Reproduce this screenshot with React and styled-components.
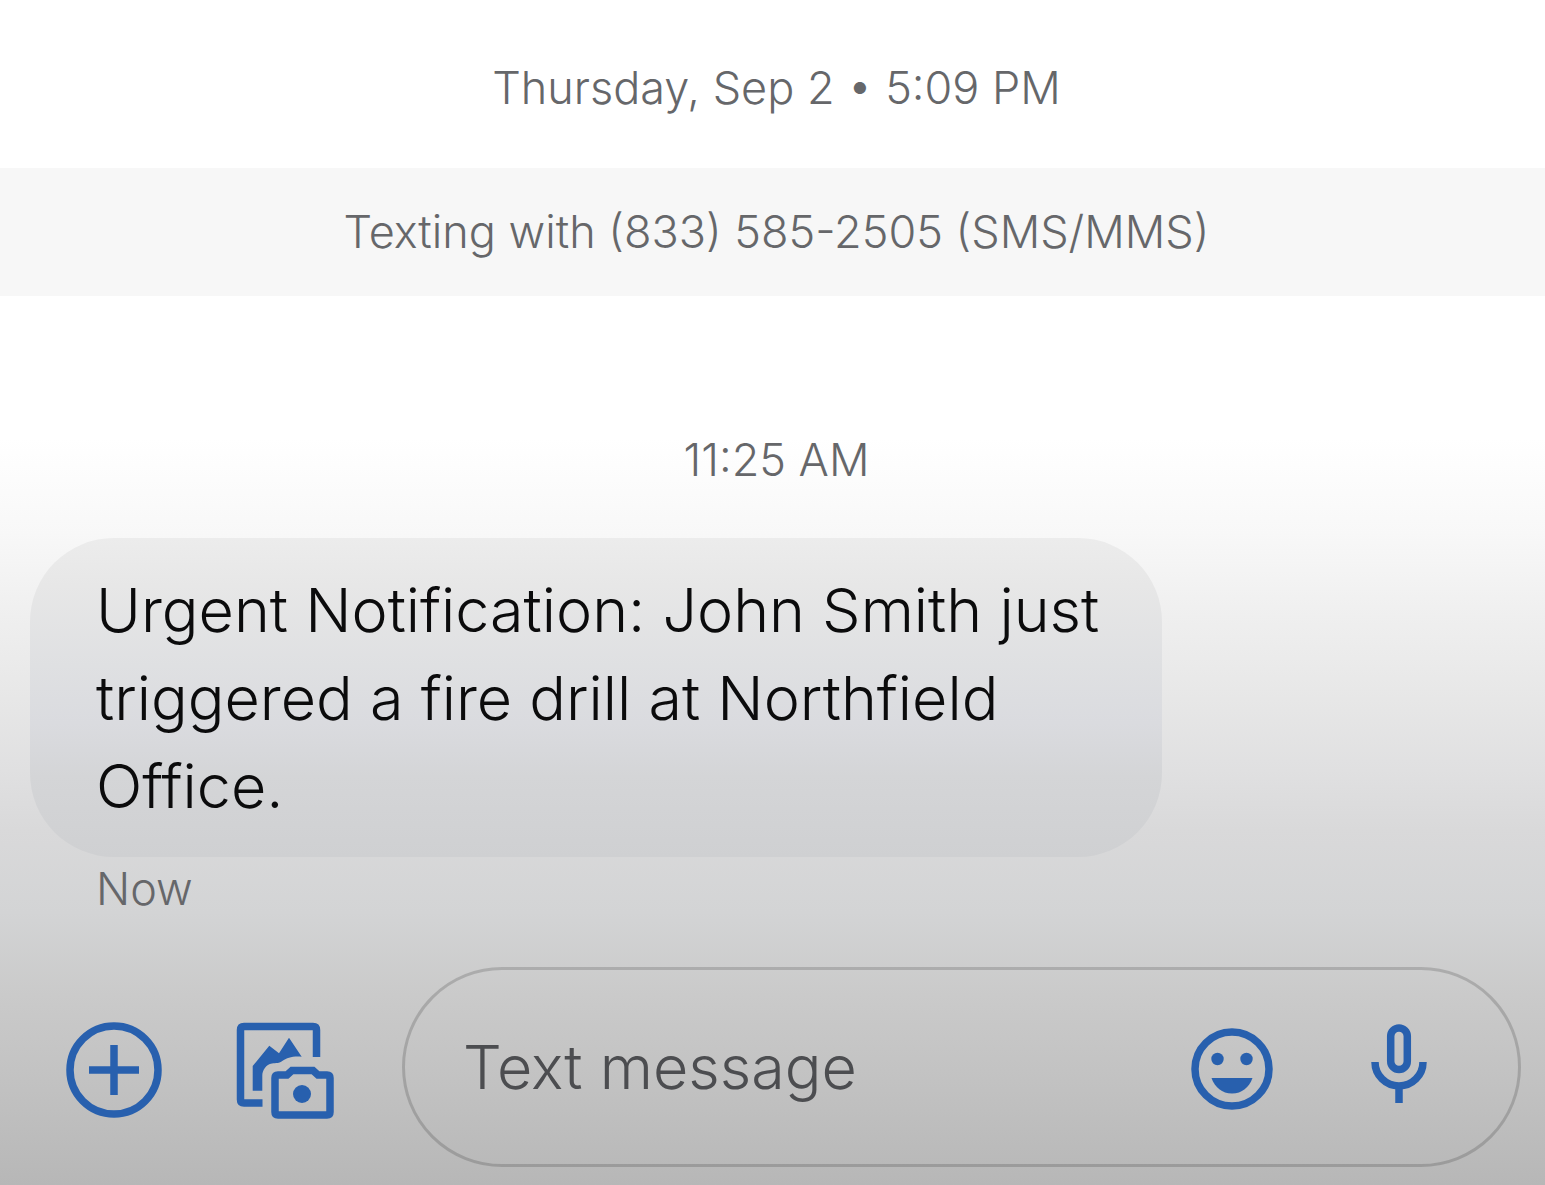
import React from 'react'
import styled, { createGlobalStyle } from 'styled-components'

const ink = '#0b0b0c'
const blue = '#2860ae'
const slate = '#66676a'

const GlobalStyle = createGlobalStyle`
  * {
    box-sizing: border-box;
  }

  body {
    margin: 0;
    font-family: Inter, 'Liberation Sans', sans-serif;
    font-weight: 300;
  }
`

const Screen = styled.main`
  display: flex;
  flex-direction: column;
  min-height: 100vh;
  background: linear-gradient(
    #ffffff 37%,
    #f8f8f8 45%,
    #efefef 52%,
    #e7e7e7 59%,
    #e0e0e1 65%,
    #d9d9da 70%,
    #d3d4d5 77%,
    #cacaca 84%,
    #c1c1c1 92%,
    #b7b7b7
  );
`

const Stamp = styled.div`
  padding: ${p => p.pad};
  font-size: 45px;
  line-height: 64px;
  text-align: center;
  color: ${slate};
  background: ${p => (p.band ? '#f7f7f7' : 'transparent')};
`

const Thread = styled.section`
  display: flex;
  flex: 1;
  flex-direction: column;
  align-items: flex-start;
  padding: 0 26px 0 30px;
`

const Bubble = styled.p`
  width: 76%;
  margin: 0;
  padding: 28px 48px 27px 66px;
  border-radius: 84px;
  font-size: 61px;
  line-height: 88px;
  color: ${ink};
  background: linear-gradient(#ececec, #e7e7e7 15%, #dfe0e2 40%, #dadbdf 58%, #d4d5d7 75%, #cfd0d2);
`

const Status = styled.div`
  padding-left: 66px;
  font-size: 45px;
  line-height: 64px;
  color: ${slate};
`

const Composer = styled.form`
  display: flex;
  align-items: center;
  padding: 0 24px 18px 66px;
`

const Tools = styled.div`
  display: flex;
  flex: none;
  gap: 74px;
  padding: 8px 68px 0 0;
`

const Actions = styled.div`
  display: flex;
  flex: none;
  gap: 98px;
  padding-right: 91px;
`

const IconButton = styled.button`
  display: flex;
  padding: 0;
  border: 0;
  background: none;
  color: ${blue};
  cursor: pointer;
`

const Field = styled.div`
  display: flex;
  flex: 1;
  align-items: center;
  min-width: 0;
  height: 200px;
  padding-left: 58px;
  border: 3px solid rgba(0, 0, 0, 0.16);
  border-radius: 100px;
`

const Input = styled.input`
  flex: 1;
  min-width: 0;
  padding: 0;
  border: 0;
  outline: 0;
  background: none;
  font: inherit;
  font-size: 61px;
  line-height: 88px;
  color: ${ink};

  &::placeholder {
    color: #4c4d50;
    opacity: 1;
  }
`

const Line = styled.svg`
  display: block;
  fill: none;
  stroke: currentColor;
  stroke-width: 7.5;
`

const PlusIcon = () => (
  <Line width="96" height="96" viewBox="0 0 96 96" aria-hidden="true">
    <circle cx="48" cy="48" r="44" />
    <path d="M48 23v50M23 48h50" />
  </Line>
)

const GalleryIcon = () => (
  <Line width="98" height="98" viewBox="0 0 98 98" aria-hidden="true">
    <path d="M26.5 81H8Q4.5 81 4.5 77.5V8Q4.5 4.5 8 4.5h69q3.5 0 3.5 3.5v27" />
    <path
      d="M16.7 68.7V44L33.3 23.7 43 31.3 53 15.7 65.7 34.7C56 34 51 36 47 38.5C43 41.500 40 41 36 41.500C30 42.500 26.300 48 26.300 54v14.700z"
      fill="currentColor"
      stroke="none"
    />
    <path d="M42 53h9l5-4.5h21l5 4.5h9q3 0 3 3v34q0 3-3 3H42q-3 0-3-3V56q0-3 3-3z" />
    <circle cx="66" cy="72" r="9" fill="currentColor" stroke="none" />
  </Line>
)

const SmileIcon = () => (
  <Line width="82" height="86" viewBox="0 -4 82 86" aria-hidden="true">
    <circle cx="41" cy="41" r="37" />
    <g fill="currentColor" stroke="none">
      <circle cx="26.5" cy="31" r="6.2" />
      <circle cx="55.5" cy="31" r="6.2" />
      <path d="M20.5 50h41C58 59.5 51 65.5 41 65.5S24 59.5 20.5 50z" />
    </g>
  </Line>
)

const MicIcon = () => (
  <Line width="56" height="86" viewBox="0 0 56 86" aria-hidden="true">
    <rect x="19.7" y="4" width="16.6" height="41.5" rx="8.3" />
    <path d="M4 38a24 24 0 0 0 48 0M28 62v17" />
  </Line>
)

export default function App() {
  return (
    <>
      <GlobalStyle />
      <Screen>
        <Stamp pad="56px 0 48px 8px">Thursday, Sep 2 • 5:09 PM</Stamp>
        <Stamp pad="32px 0 32px 8px" band>
          Texting with (833) 585-2505 (SMS/MMS)
        </Stamp>
        <Stamp pad="132px 0 46px 8px">11:25 AM</Stamp>
        <Thread>
          <Bubble>
            Urgent Notification: John Smith just triggered a fire drill at Northfield Office.
          </Bubble>
          <Status>Now</Status>
        </Thread>
        <Composer onSubmit={e => e.preventDefault()}>
          <Tools>
            <IconButton type="button" aria-label="Add attachment">
              <PlusIcon />
            </IconButton>
            <IconButton type="button" aria-label="Gallery and camera">
              <GalleryIcon />
            </IconButton>
          </Tools>
          <Field>
            <Input type="text" aria-label="Text message" placeholder="Text message" />
            <Actions>
              <IconButton type="button" aria-label="Emoji">
                <SmileIcon />
              </IconButton>
              <IconButton type="button" aria-label="Voice message">
                <MicIcon />
              </IconButton>
            </Actions>
          </Field>
        </Composer>
      </Screen>
    </>
  )
}
